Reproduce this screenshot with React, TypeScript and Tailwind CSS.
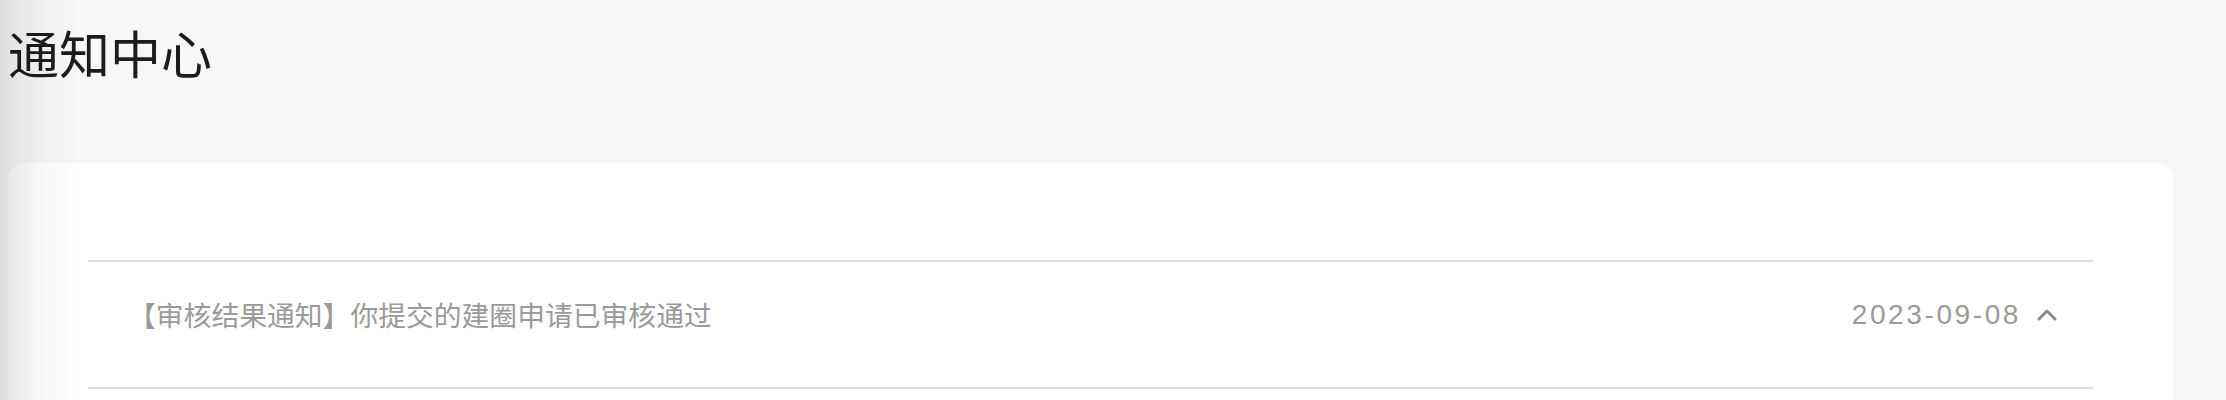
interface Notice {
  title: string;
  date: string;
}

const NOTICES: Notice[] = [
  { title: '【审核结果通知】你提交的建圈申请已审核通过', date: '2023-09-08' },
];

const CJK = { fontFamily: '"Noto Sans CJK SC", "Noto Sans", sans-serif' };

function NoticeRow({ notice }: { notice: Notice }) {
  return (
    <div className="flex h-[127px] items-center justify-between border-b-2 border-[#dcdcdc] pb-[19px] pl-10 pr-[36px]">
      <span className="text-[27.8px] leading-none text-[#9a9a9a]" style={CJK}>
        {notice.title}
      </span>
      <div className="flex items-center">
        <span className="font-['Liberation_Sans',sans-serif] text-[28px] leading-none tracking-[2.6px] text-[#9a9a9a]">
          {notice.date}
        </span>
        <svg width="20" height="12" viewBox="0 0 20 12" className="ml-4" fill="none">
          <polyline
            points="2,10 10,2 18,10"
            stroke="#8a8a8a"
            strokeWidth="3"
            strokeLinecap="round"
            strokeLinejoin="round"
          />
        </svg>
      </div>
    </div>
  );
}

export default function App() {
  return (
    <div className="relative h-[400px] w-[2226px] overflow-hidden bg-[#f6f7f9]">
      <h1 className="pl-2 pt-[27px] text-[51px] font-normal leading-none text-[#1c1c1c]" style={CJK}>
        通知中心
      </h1>

      <div className="ml-2 mr-[53px] mt-[85px] rounded-[16px] bg-white px-20 pb-16 pt-[97px]">
        <div className="border-t-2 border-[#dcdcdc]">
          {NOTICES.map((n) => (
            <NoticeRow key={n.title} notice={n} />
          ))}
        </div>
      </div>

      <div className="pointer-events-none absolute inset-y-0 left-0 w-[80px] bg-gradient-to-r from-black/[0.1] via-black/[0.03] to-transparent" />
    </div>
  );
}
